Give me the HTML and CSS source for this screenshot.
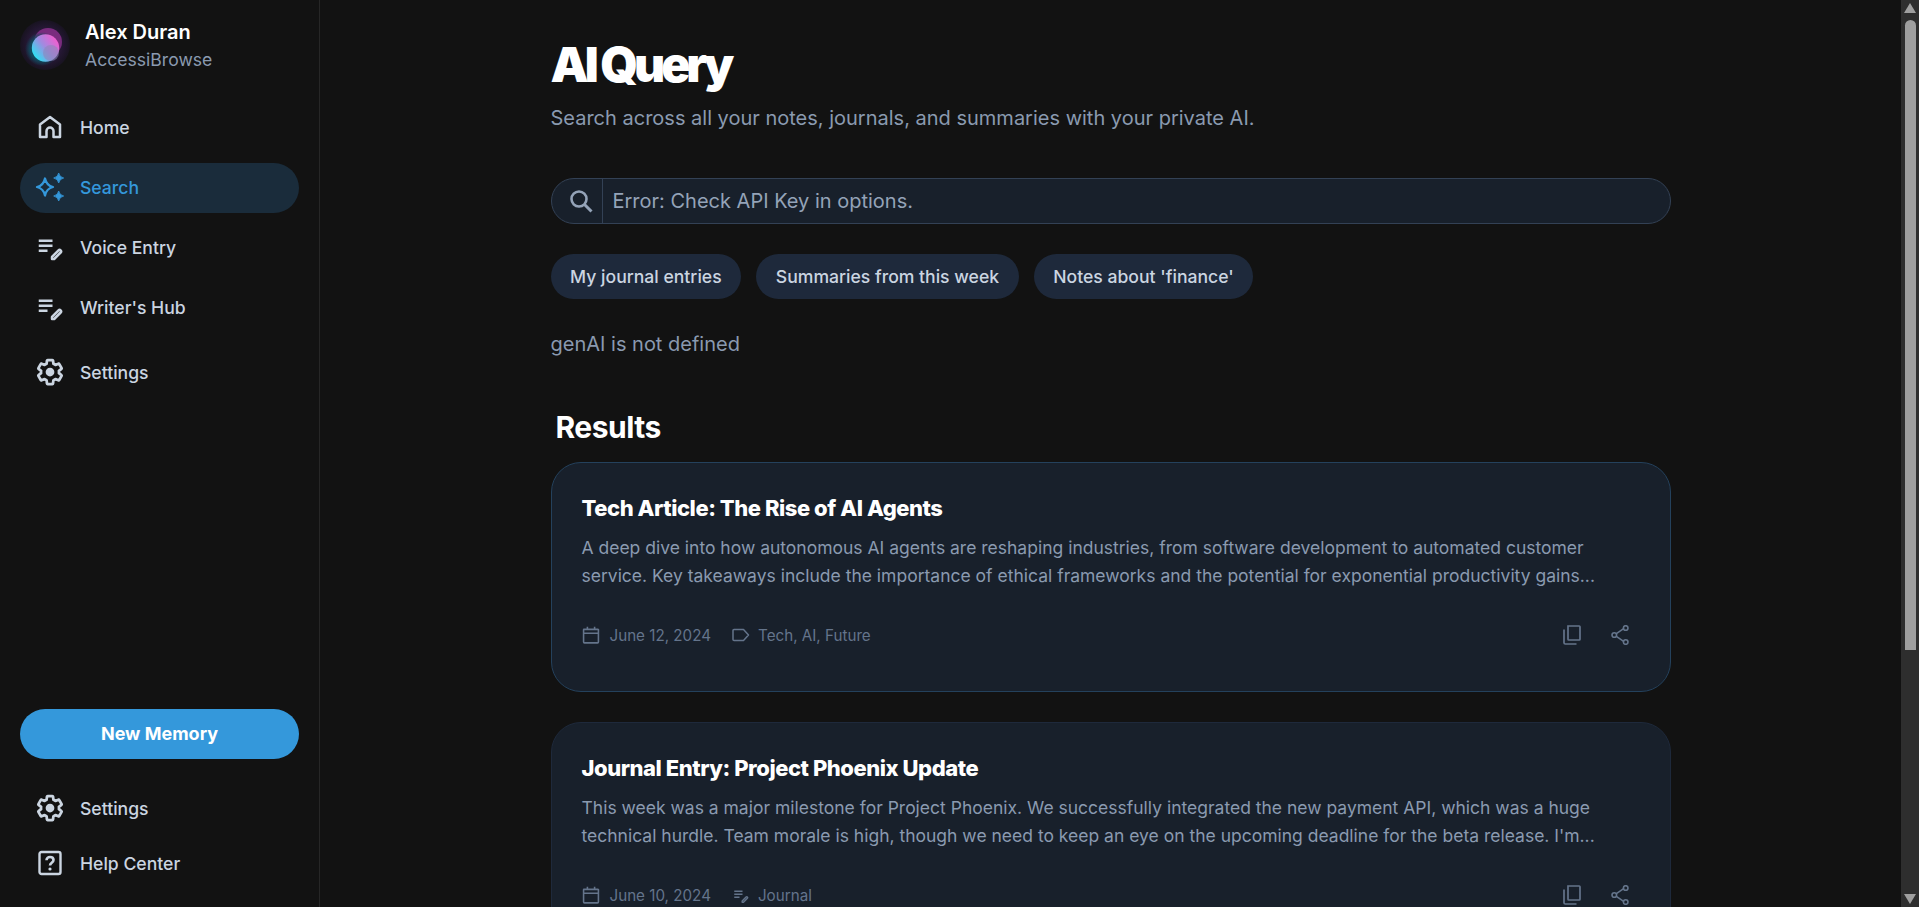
FILE: index.html
```html
<!DOCTYPE html>
<html lang="en">
<head>
    <meta charset="UTF-8">
    <title>AI Query</title>
    <link rel="stylesheet" href="styles.css">
</head>
<body>
    <svg class="icon-defs" width="0" height="0">
        <symbol id="i-note" viewBox="0 0 24 24">
            <path fill="currentColor" d="M3 10h11v2H3zM3 6h11v2H3zM3 14h7v2H3z"/>
            <path fill="none" stroke="currentColor" stroke-width="2" stroke-linejoin="round" d="M13.600 19.900l5.200-5.200c.5-.5 1.200-.5 1.700 0 .5.5.5 1.200 0 1.700l-5.200 5.200h-1.700z"/>
        </symbol>
        <symbol id="i-gear" viewBox="0 0 24 24">
            <path fill="none" stroke="currentColor" stroke-width="2.200" stroke-linejoin="round" d="M19.140 12.940c.04-.3.06-.61.06-.94 0-.32-.02-.64-.07-.94l2.030-1.580c.18-.14.23-.41.12-.61l-1.920-3.320c-.12-.22-.37-.29-.59-.22l-2.390.96c-.5-.38-1.030-.7-1.620-.94l-.36-2.540c-.04-.24-.24-.41-.48-.41h-3.840c-.24 0-.43.17-.47.41l-.36 2.540c-.59.24-1.130.57-1.620.94l-2.390-.96c-.22-.08-.47 0-.59.22L2.740 8.870c-.12.21-.08.47.12.61l2.030 1.580c-.05.3-.09.63-.09.94s.02.64.07.94l-2.030 1.580c-.18.14-.23.41-.12.61l1.920 3.320c.12.22.37.29.59.22l2.390-.96c.5.38 1.030.7 1.620.94l.36 2.540c.05.24.24.41.48.41h3.840c.24 0 .44-.17.47-.41l.36-2.540c.59-.24 1.130-.56 1.620-.94l2.390.96c.22.08.47 0 .59-.22l1.920-3.320c.12-.22.07-.47-.12-.61z"/>
            <circle cx="12" cy="12" r="3.500" fill="currentColor"/>
        </symbol>
        <symbol id="i-calendar" viewBox="0 0 16 16">
            <path fill="none" stroke="currentColor" stroke-width="1.400" d="M1.700 3h12.600a.3.3 0 0 1 .3.300v11a.7.7 0 0 1-.7.700H2.100a.7.7 0 0 1-.7-.7V3.300a.3.3 0 0 1 .3-.3zM1.400 6.400h13.200M4.800.6v3M11.200.6v3"/>
        </symbol>
        <symbol id="i-copy" viewBox="0 0 18 20">
            <path fill="none" stroke="currentColor" stroke-width="1.700" d="M5 1h11.200a.8.8 0 0 1 .8.800v12.400a.8.8 0 0 1-.8.800H5.800a.8.8 0 0 1-.8-.8zM1 4.500v13.200c0 .7.600 1.300 1.300 1.300h11.200"/>
        </symbol>
        <symbol id="i-share" viewBox="0 0 18 20">
            <path fill="none" stroke="currentColor" stroke-width="1.600" d="M5 8.800l8-5.400M5 11.200l8 5.400"/>
            <circle cx="3.300" cy="10" r="2.300" fill="none" stroke="currentColor" stroke-width="1.600"/>
            <circle cx="14.700" cy="3" r="2.300" fill="none" stroke="currentColor" stroke-width="1.600"/>
            <circle cx="14.700" cy="17" r="2.300" fill="none" stroke="currentColor" stroke-width="1.600"/>
        </symbol>
    </svg>

    <div class="app">
        <aside class="sidebar">
            <div class="profile">
                <svg class="avatar" viewBox="0 0 50 50">
                    <defs>
                        <radialGradient id="glow">
                            <stop offset="0" stop-color="#4a2560"/>
                            <stop offset="0.7" stop-color="#241733"/>
                            <stop offset="1" stop-color="#181320"/>
                        </radialGradient>
                        <radialGradient id="halo">
                            <stop offset="0.7" stop-color="#12485c"/>
                            <stop offset="1" stop-color="#12485c" stop-opacity="0"/>
                        </radialGradient>
                        <linearGradient id="orb" x1="0.1" y1="0.8" x2="0.9" y2="0.2">
                            <stop offset="0" stop-color="#2fe0f2"/>
                            <stop offset="0.5" stop-color="#a08be0"/>
                            <stop offset="1" stop-color="#f05fd0"/>
                        </linearGradient>
                    </defs>
                    <circle cx="25" cy="25" r="25" fill="url(#glow)"/>
                    <circle cx="28" cy="22" r="14" fill="#7a2c7e"/>
                    <circle cx="22" cy="29" r="17" fill="url(#halo)"/>
                    <circle cx="25.500" cy="28" r="13.700" fill="url(#orb)"/>
                    <circle cx="31" cy="33" r="8" fill="#8a86b8" opacity="0.55"/>
                </svg>
                <div class="profile-text">
                    <div class="profile-name">Alex Duran</div>
                    <div class="profile-app">AccessiBrowse</div>
                </div>
            </div>

            <nav class="nav">
                <a class="nav-item">
                    <svg class="nav-icon" viewBox="0 0 30 30"><path fill="none" stroke="currentColor" stroke-width="2.500" stroke-linejoin="round" d="M5 25V12.500L15 5l10 7.500V25h-6.500v-6a3.500 3.500 0 0 0-7 0v6z"/></svg>
                    Home
                </a>
                <a class="nav-item active">
                    <svg class="nav-icon" viewBox="0 0 30 30">
                        <path fill="none" stroke="currentColor" stroke-width="2.300" stroke-linejoin="round" d="M10 6.500Q11.500 13.500 18 15 11.500 16.500 10 23.500 8.500 16.500 2 15 8.500 13.500 10 6.500z"/>
                        <path fill="currentColor" stroke="currentColor" stroke-width="0.800" d="M23.700 1Q24.500 5.200 28.700 6 24.500 6.800 23.700 11 22.900 6.800 18.700 6 22.900 5.200 23.700 1zM23.700 19Q24.500 23.200 28.700 24 24.500 24.800 23.700 29 22.900 24.800 18.700 24 22.900 23.200 23.700 19z"/>
                    </svg>
                    Search
                </a>
                <a class="nav-item">
                    <svg class="nav-icon"><use href="#i-note"/></svg>
                    Voice Entry
                </a>
                <a class="nav-item">
                    <svg class="nav-icon"><use href="#i-note"/></svg>
                    Writer's Hub
                </a>
                <a class="nav-item nav-item-last">
                    <svg class="nav-icon"><use href="#i-gear"/></svg>
                    Settings
                </a>
            </nav>

            <div class="sidebar-bottom">
                <button class="new-button">New Memory</button>
                <div class="bottom-links">
                    <a class="nav-item">
                        <svg class="nav-icon"><use href="#i-gear"/></svg>
                        Settings
                    </a>
                    <a class="nav-item">
                        <svg class="nav-icon" viewBox="0 0 30 30">
                            <rect x="4.500" y="4" width="21" height="22" rx="2" fill="none" stroke="currentColor" stroke-width="2.400"/>
                            <path fill="none" stroke="currentColor" stroke-width="2.600" d="M11.500 12.300c0-2 1.500-3.300 3.500-3.300s3.500 1.200 3.500 3.100c0 2.700-3.500 2.600-3.500 5.400"/>
                            <circle cx="15" cy="21" r="1.600" fill="currentColor"/>
                        </svg>
                        Help Center
                    </a>
                </div>
            </div>
        </aside>

        <main class="main">
            <div class="content">
                <h1 class="page-title">AI Query</h1>
                <p class="page-sub">Search across all your notes, journals, and summaries with your private AI.</p>

                <div class="search-bar">
                    <span class="search-icon">
                        <svg width="24" height="24" viewBox="0 0 24 24"><circle cx="10" cy="10" r="7.500" fill="none" stroke="currentColor" stroke-width="2.600"/><path stroke="currentColor" stroke-width="3" d="M15 15l7.500 7.500"/></svg>
                    </span>
                    <span class="search-text">Error: Check API Key in options.</span>
                </div>

                <div class="chips">
                    <button class="chip">My journal entries</button>
                    <button class="chip">Summaries from this week</button>
                    <button class="chip">Notes about 'finance'</button>
                </div>

                <p class="status">genAI is not defined</p>

                <h2 class="results-title">Results</h2>

                <article class="card card-hover">
                    <h3 class="card-title">Tech Article: The Rise of AI Agents</h3>
                    <p class="card-text">A deep dive into how autonomous AI agents are reshaping industries, from software development to automated customer service. Key takeaways include the importance of ethical frameworks and the potential for exponential productivity gains...</p>
                    <div class="card-foot">
                        <div class="meta">
                            <svg class="meta-icon"><use href="#i-calendar"/></svg>
                            <span class="meta-label">June 12, 2024</span>
                            <svg class="meta-icon meta-tag" viewBox="0 0 18 16"><path fill="none" stroke="currentColor" stroke-width="1.500" stroke-linejoin="round" d="M1 3.500a1 1 0 0 1 1-1h9.500l5 5.500-5 5.500H2a1 1 0 0 1-1-1z"/></svg>
                            <span>Tech, AI, Future</span>
                        </div>
                        <div class="actions">
                            <svg class="action-icon"><use href="#i-copy"/></svg>
                            <svg class="action-icon"><use href="#i-share"/></svg>
                        </div>
                    </div>
                </article>

                <article class="card">
                    <h3 class="card-title">Journal Entry: Project Phoenix Update</h3>
                    <p class="card-text">This week was a major milestone for Project Phoenix. We successfully integrated the new payment API, which was a huge technical hurdle. Team morale is high, though we need to keep an eye on the upcoming deadline for the beta release. I'm...</p>
                    <div class="card-foot">
                        <div class="meta">
                            <svg class="meta-icon"><use href="#i-calendar"/></svg>
                            <span class="meta-label">June 10, 2024</span>
                            <svg class="meta-icon meta-tag"><use href="#i-note"/></svg>
                            <span>Journal</span>
                        </div>
                        <div class="actions">
                            <svg class="action-icon"><use href="#i-copy"/></svg>
                            <svg class="action-icon"><use href="#i-share"/></svg>
                        </div>
                    </div>
                </article>
            </div>
        </main>

        <div class="scrollbar">
            <span class="arrow arrow-up"></span>
            <span class="thumb"></span>
            <span class="arrow arrow-down"></span>
        </div>
    </div>
</body>
</html>
```

FILE: styles.css
```css
* {
    box-sizing: border-box;
}

html, body {
    height: 100%;
}

body {
    margin: 0;
    overflow: hidden;
    background-color: #121212;
    font-family: 'Inter', 'Liberation Sans', sans-serif;
    color: #ffffff;
}

.icon-defs {
    display: block;
}

.app {
    display: flex;
    height: 907px;
}

.sidebar {
    width: 320px;
    flex-shrink: 0;
    display: flex;
    flex-direction: column;
    padding: 20px 20px 18px;
    border-right: 1px solid #262626;
}

.profile {
    display: flex;
    align-items: center;
    gap: 15px;
    height: 50px;
    margin-bottom: 33px;
}

.avatar {
    width: 50px;
    height: 50px;
    flex-shrink: 0;
}

.profile-name {
    font-size: 20px;
    font-weight: 600;
    line-height: 28px;
}

.profile-app {
    font-size: 17.600px;
    line-height: 26px;
    margin-top: 1px;
    color: #8a9ab0;
}

.nav {
    display: flex;
    flex-direction: column;
    gap: 10px;
}

.nav-item {
    display: flex;
    align-items: center;
    gap: 15px;
    height: 50px;
    padding-left: 15px;
    padding-bottom: 2px;
    border-radius: 25px;
    font-size: 17.600px;
    font-weight: 500;
    color: #cbd5e1;
}

.nav-item.active {
    background-color: #1a2c3b;
    color: #3498db;
}

.nav-item-last {
    margin-top: 5px;
}

.nav-icon {
    width: 30px;
    height: 30px;
    flex-shrink: 0;
}

.sidebar-bottom {
    margin-top: auto;
}

.new-button {
    display: block;
    width: 100%;
    height: 50px;
    padding-bottom: 3px;
    border: none;
    border-radius: 25px;
    background-color: #3498db;
    color: #ffffff;
    font-family: inherit;
    font-size: 18px;
    font-weight: 700;
}

.bottom-links {
    display: flex;
    flex-direction: column;
    gap: 5px;
    margin-top: 25px;
}

.main {
    flex: 1;
    overflow: hidden;
}

.content {
    width: 1120px;
    margin: 0 auto;
    padding-top: 33px;
}

.page-title {
    margin: 0;
    font-size: 48px;
    line-height: 64px;
    font-weight: 900;
    letter-spacing: -4px;
}

.page-sub {
    margin: 7px 0 0;
    font-size: 20px;
    line-height: 28px;
    color: #8a9ab0;
}

.search-bar {
    display: flex;
    align-items: center;
    height: 46px;
    margin-top: 46px;
    border: 1px solid #334155;
    border-radius: 23px;
    background-color: #18202b;
}

.search-icon {
    display: flex;
    align-items: center;
    justify-content: center;
    width: 51px;
    height: 100%;
    padding-left: 8px;
    border-right: 1px solid #334155;
    color: #94a3b8;
}

.search-text {
    padding-left: 10px;
    font-size: 20px;
    color: #94a3b8;
}

.chips {
    display: flex;
    gap: 15px;
    margin-top: 30px;
}

.chip {
    height: 45px;
    padding: 0 19.600px;
    border: none;
    border-radius: 23px;
    background-color: #1e293b;
    color: #cbd5e1;
    font-family: inherit;
    font-size: 17.600px;
    font-weight: 500;
}

.status {
    margin: 30px 0 0;
    font-size: 20px;
    line-height: 30px;
    color: #8a9ab0;
}

.results-title {
    margin: 50px 0 0;
    padding-left: 5px;
    font-size: 30px;
    line-height: 36px;
    font-weight: 700;
    letter-spacing: -0.500px;
}

.card {
    height: 230px;
    margin-top: 17px;
    padding: 30px;
    border: 1px solid #1e293b;
    border-radius: 30px;
    background-color: #18202b;
}

.card + .card {
    margin-top: 30px;
}

.card-hover {
    border-color: #24415c;
}

.card-title {
    margin: 0;
    font-size: 22px;
    line-height: 30px;
    font-weight: 800;
    letter-spacing: -0.450px;
}

.card-text {
    margin: 11px 0 0;
    font-size: 17.500px;
    line-height: 28px;
    color: #8a9ab0;
}

.card-foot {
    display: flex;
    align-items: center;
    justify-content: space-between;
    margin-top: 35px;
}

.meta {
    display: flex;
    align-items: center;
    font-size: 15.200px;
    color: #64748b;
}

.meta-icon {
    width: 18px;
    height: 18px;
    flex-shrink: 0;
}

.meta-label {
    margin-left: 10px;
    margin-right: 21px;
}

.meta-tag {
    margin-right: 8px;
}

.actions {
    display: flex;
    gap: 30px;
    margin-right: 11px;
    color: #64748b;
}

.action-icon {
    width: 18px;
    height: 20px;
}

.scrollbar {
    width: 18px;
    flex-shrink: 0;
    display: flex;
    flex-direction: column;
    align-items: center;
    background-color: #2e2e2e;
}

.thumb {
    width: 11px;
    height: 630px;
    margin-top: 7px;
    border-radius: 6px 6px 0 0;
    background-color: #9f9f9f;
}

.arrow {
    width: 0;
    height: 0;
    border-left: 6px solid transparent;
    border-right: 6px solid transparent;
}

.arrow-up {
    margin-top: 3px;
    border-bottom: 10px solid #9f9f9f;
}

.arrow-down {
    margin-top: auto;
    margin-bottom: 3px;
    border-top: 10px solid #9f9f9f;
}
```
